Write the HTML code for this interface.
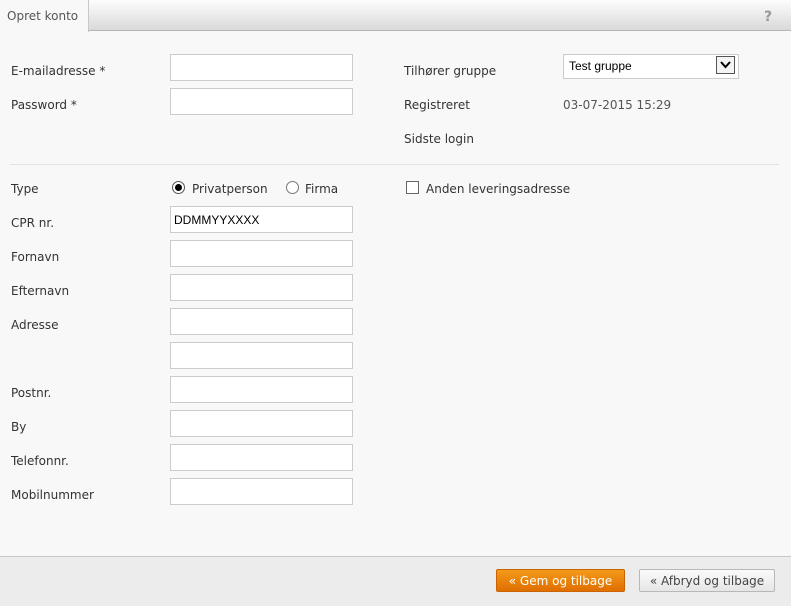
<!DOCTYPE html>
<html><head><style>
body{margin:0;width:791px;height:605px;background:#f8f8f8;font-family:"DejaVu Sans","Liberation Sans",sans-serif;font-size:12px;color:#333;position:relative;overflow:hidden}
.a{position:absolute}
.t{margin-top:1px}
.tabbar{left:0;top:0;width:791px;height:31px;background:linear-gradient(#fdfdfd,#d9d9d9);border-bottom:1px solid #b5b5b5;box-sizing:border-box}
.tab{left:0;top:0;width:89px;height:32px;background:#f8f8f8;border-right:1px solid #c8c8c8;box-sizing:border-box;padding:9px 0 0 7px;color:#555}
.inp{width:183px;height:27px;border:1px solid #ccc;background:#fff;box-sizing:border-box}
.lbl{left:11px}
.foot{left:0;top:556px;width:791px;height:49px;background:#ececec;border-top:1px solid #c8c8c8}
.btn{height:23px;box-sizing:border-box;border-radius:2px;font-size:12px;padding-top:4px;text-align:center}
</style></head><body>
<div class="a tabbar"></div>
<div class="a tab">Opret konto</div>
<div class="a" style="left:764px;top:9px;font-weight:bold;color:#999;font-size:14px">?</div>

<div class="a lbl t" style="top:63px">E-mailadresse *</div>
<div class="a inp" style="left:170px;top:54px"></div>
<div class="a lbl t" style="top:97px">Password *</div>
<div class="a inp" style="left:170px;top:88px"></div>

<div class="a t" style="left:404px;top:63px">Tilhører gruppe</div>
<div class="a" style="left:563px;top:54px;width:176px;height:25px;border:1px solid #ccc;background:#fff;box-sizing:border-box;font-family:'Liberation Sans',sans-serif;font-size:12px;padding:4px 0 0 5px;color:#000">Test gruppe</div>
<div class="a" style="left:716px;top:56px;width:19px;height:18px;border:1px solid #555;box-sizing:border-box;background:#f4f4f4"><svg width="17" height="16" viewBox="0 0 17 16"><path d="M4 5 L8.5 10 L13 5" stroke="#000" stroke-width="2" fill="none"/></svg></div>
<div class="a t" style="left:404px;top:97px">Registreret</div>
<div class="a t" style="left:563px;top:97px;color:#555">03-07-2015 15:29</div>
<div class="a t" style="left:404px;top:131px">Sidste login</div>

<div class="a" style="left:10px;top:164px;width:769px;height:1px;background:#e2e2e2"></div>

<div class="a lbl t" style="top:181px">Type</div>
<div class="a" style="left:172px;top:181px;width:13px;height:13px;border:1px solid #555;border-radius:50%;box-sizing:border-box;background:#fff"><div style="margin:2px;width:7px;height:7px;border-radius:50%;background:#000"></div></div>
<div class="a t" style="left:192px;top:181px">Privatperson</div>
<div class="a" style="left:286px;top:181px;width:13px;height:13px;border:1px solid #777;border-radius:50%;box-sizing:border-box;background:#fff"></div>
<div class="a t" style="left:305px;top:181px">Firma</div>
<div class="a" style="left:406px;top:181px;width:13px;height:13px;border:1px solid #666;box-sizing:border-box;background:#fff"></div>
<div class="a t" style="left:426px;top:181px">Anden leveringsadresse</div>

<div class="a lbl t" style="top:215px">CPR nr.</div>
<div class="a inp" style="left:170px;top:206px;font-family:'Liberation Sans',sans-serif;font-size:12px;padding:6px 0 0 3px;color:#000">DDMMYYXXXX</div>
<div class="a lbl t" style="top:249px">Fornavn</div>
<div class="a inp" style="left:170px;top:240px"></div>
<div class="a lbl t" style="top:283px">Efternavn</div>
<div class="a inp" style="left:170px;top:274px"></div>
<div class="a lbl t" style="top:317px">Adresse</div>
<div class="a inp" style="left:170px;top:308px"></div>
<div class="a inp" style="left:170px;top:342px"></div>
<div class="a lbl t" style="top:385px">Postnr.</div>
<div class="a inp" style="left:170px;top:376px"></div>
<div class="a lbl t" style="top:419px">By</div>
<div class="a inp" style="left:170px;top:410px"></div>
<div class="a lbl t" style="top:453px">Telefonnr.</div>
<div class="a inp" style="left:170px;top:444px"></div>
<div class="a lbl t" style="top:487px">Mobilnummer</div>
<div class="a inp" style="left:170px;top:478px"></div>

<div class="a foot"></div>
<div class="a btn" style="left:496px;top:569px;width:129px;background:linear-gradient(#f39a1a,#e06f00);border:1px solid #c96400;color:#fff">« Gem og tilbage</div>
<div class="a btn" style="left:639px;top:569px;width:136px;background:linear-gradient(#fafafa,#e6e6e6);border:1px solid #b8b8b8;color:#444">« Afbryd og tilbage</div>
</body></html>
